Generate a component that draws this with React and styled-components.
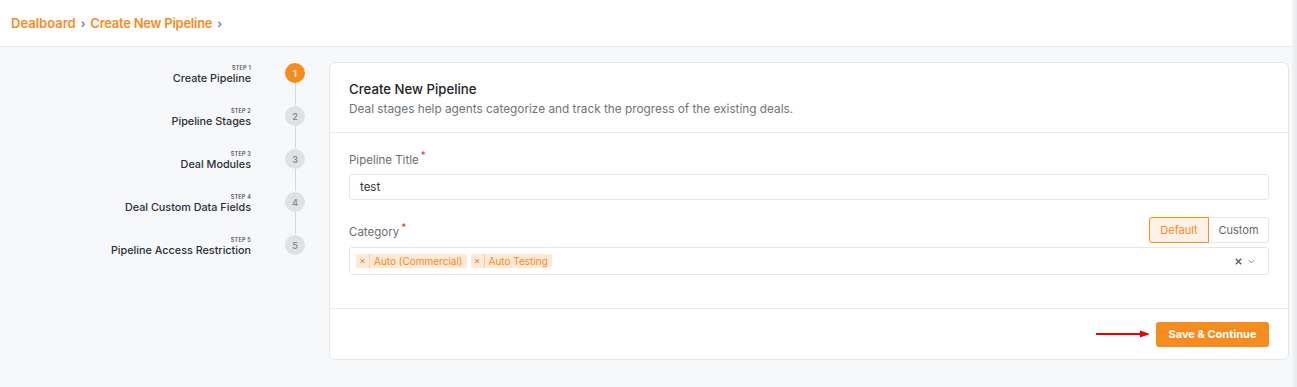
import styled, { createGlobalStyle } from "styled-components";

const GlobalStyle = createGlobalStyle`
  html, body {
    margin: 0;
    padding: 0;
    background: #f7f8fa;
    font-family: Inter, "Noto Sans", sans-serif;
  }
  * { box-sizing: border-box; }
`;

const Page = styled.div`
  width: 1297px;
  height: 387px;
  display: flex;
  background: #f7f8fa;
  overflow: hidden;
`;

const Main = styled.div`
  flex: 1;
  display: flex;
  flex-direction: column;
`;

const Header = styled.div`
  height: 47px;
  flex-shrink: 0;
  background: #fff;
  border-bottom: 1px solid #e9eaec;
  display: flex;
  align-items: center;
  padding-left: 11px;
  gap: 4px;
`;

const Crumb = styled.span`
  color: #f68b1f;
  font-size: 13px;
  font-weight: 600;
  letter-spacing: ${({ tight }) => (tight ? "-0.25px" : "0")};
`;

const Chevron = styled.span`
  color: #555;
  font-size: 12px;
  margin: 0 1px;
`;

const Body = styled.div`
  flex: 1;
  display: flex;
  padding-top: 15px;
`;

const Steps = styled.div`
  width: 329px;
  flex-shrink: 0;
  display: flex;
  flex-direction: column;
`;

const Step = styled.div`
  display: flex;
  align-items: flex-start;
  height: 43px;
`;

const StepText = styled.div`
  width: 251px;
  padding-top: 2px;
  display: flex;
  flex-direction: column;
  align-items: flex-end;
`;

const StepNo = styled.div`
  font-size: 5.5px;
  font-weight: 600;
  color: #555;
  letter-spacing: 0.2px;
  line-height: 8px;
`;

const StepTitle = styled.div`
  font-size: 10.8px;
  font-weight: 500;
  color: #2b2f36;
  line-height: 14px;
`;

const Marker = styled.div`
  width: 78px;
  display: flex;
  flex-direction: column;
  align-items: center;
  align-self: stretch;
  padding-left: 10px;
  padding-top: 1px;
`;

const Dot = styled.div`
  width: 20px;
  height: 20px;
  border-radius: 50%;
  flex-shrink: 0;
  display: flex;
  align-items: center;
  justify-content: center;
  font-size: 9px;
  font-weight: 600;
  background: ${({ active }) => (active ? "#f68b1f" : "#e0e1e3")};
  color: ${({ active }) => (active ? "#fff" : "#8a8d92")};
`;

const Line = styled.div`
  width: 1px;
  flex: 1;
  background: ${({ last }) => (last ? "transparent" : "#d6d7da")};
`;

const Card = styled.div`
  width: 960px;
  height: 298px;
  background: #fff;
  border: 1px solid #e4e6ea;
  border-radius: 6px;
  display: flex;
  flex-direction: column;
`;

const CardHead = styled.div`
  padding: 17px 19px 0;
  height: 70px;
  flex-shrink: 0;
  border-bottom: 1px solid #e9eaec;
`;

const CardTitle = styled.div`
  font-size: 13.2px;
  font-weight: 500;
  color: #222;
  line-height: 18px;
`;

const CardSub = styled.div`
  margin-top: 4px;
  font-size: 11.8px;
  color: #707378;
  line-height: 15px;
`;

const Form = styled.div`
  flex: 1;
  padding: 15px 19px 0;
  border-bottom: 1px solid #e9eaec;
  display: flex;
  flex-direction: column;
`;

const LabelRow = styled.div`
  display: flex;
  align-items: center;
  justify-content: space-between;
  height: ${({ tall }) => (tall ? "26px" : "20px")};
  margin-bottom: ${({ tall }) => (tall ? "4px" : "6px")};
`;

const Label = styled.div`
  font-size: 11.5px;
  color: #6b6e73;
  & sup {
    color: #e53935;
    font-size: 10px;
    margin-left: 2px;
  }
`;

const Input = styled.div`
  height: 26px;
  border: 1px solid #e4e6ea;
  border-radius: 3px;
  display: flex;
  align-items: center;
  padding: 0 10px;
  font-size: 11.5px;
  color: #333;
  margin-bottom: 17px;
`;

const Toggle = styled.div`
  display: flex;
  height: 26px;
`;

const ToggleBtn = styled.div`
  width: 60px;
  display: flex;
  align-items: center;
  justify-content: center;
  font-size: 11px;
  border: 1px solid ${({ on }) => (on ? "#f68b1f" : "#e4e6ea")};
  border-left: ${({ on }) => (on ? "1px solid #f68b1f" : "none")};
  border-radius: ${({ on }) => (on ? "3px 0 0 3px" : "0 3px 3px 0")};
  background: ${({ on }) => (on ? "#fdf1e6" : "#fff")};
  color: ${({ on }) => (on ? "#f68b1f" : "#666")};
`;

const Select = styled.div`
  height: 28px;
  border: 1px solid #e4e6ea;
  border-radius: 3px;
  display: flex;
  align-items: center;
  padding: 0 6px;
  gap: 4px;
`;

const Chip = styled.div`
  display: flex;
  align-items: center;
  height: 14px;
  background: #fde9d6;
  border-radius: 2px;
  font-size: 10px;
  color: #f68b1f;
`;

const ChipX = styled.span`
  width: 14px;
  text-align: center;
  font-size: 9px;
  border-right: 1px solid #f7cfa6;
  line-height: 14px;
  color: #e07a18;
`;

const ChipText = styled.span`
  padding: 0 4px;
`;

const SelectIcons = styled.div`
  margin-left: auto;
  display: flex;
  align-items: center;
  gap: 4px;
  padding-right: 6px;
`;

const Footer = styled.div`
  height: 50px;
  display: flex;
  align-items: center;
  justify-content: flex-end;
  padding-right: 19px;
  gap: 4px;
`;

const SaveBtn = styled.button`
  width: 113px;
  height: 25px;
  border: none;
  border-radius: 3px;
  background: #f68b1f;
  color: #fff;
  font-family: inherit;
  font-size: 11px;
  font-weight: 700;
`;

const Edge = styled.div`
  width: 5px;
  flex-shrink: 0;
  background: linear-gradient(to right, #f3f4f6, #e8e9eb);
`;

const steps = [
  "Create Pipeline",
  "Pipeline Stages",
  "Deal Modules",
  "Deal Custom Data Fields",
  "Pipeline Access Restriction",
];

export default function App() {
  return (
    <>
      <GlobalStyle />
      <Page>
        <Main>
          <Header>
            <Crumb>Dealboard</Crumb>
            <Chevron>›</Chevron>
            <Crumb tight>Create New Pipeline</Crumb>
            <Chevron>›</Chevron>
          </Header>
          <Body>
            <Steps>
              {steps.map((s, i) => (
                <Step key={s}>
                  <StepText>
                    <StepNo>STEP {i + 1}</StepNo>
                    <StepTitle>{s}</StepTitle>
                  </StepText>
                  <Marker>
                    <Dot active={i === 0}>{i + 1}</Dot>
                    <Line last={i === steps.length - 1} />
                  </Marker>
                </Step>
              ))}
            </Steps>
            <Card>
              <CardHead>
                <CardTitle>Create New Pipeline</CardTitle>
                <CardSub>
                  Deal stages help agents categorize and track the progress of the existing deals.
                </CardSub>
              </CardHead>
              <Form>
                <LabelRow>
                  <Label>
                    Pipeline Title<sup>*</sup>
                  </Label>
                </LabelRow>
                <Input>test</Input>
                <LabelRow tall>
                  <Label>
                    Category<sup>*</sup>
                  </Label>
                  <Toggle>
                    <ToggleBtn on>Default</ToggleBtn>
                    <ToggleBtn>Custom</ToggleBtn>
                  </Toggle>
                </LabelRow>
                <Select>
                  <Chip>
                    <ChipX>×</ChipX>
                    <ChipText>Auto (Commercial)</ChipText>
                  </Chip>
                  <Chip>
                    <ChipX>×</ChipX>
                    <ChipText>Auto Testing</ChipText>
                  </Chip>
                  <SelectIcons>
                    <svg width="9" height="9" viewBox="0 0 10 10">
                      <path d="M2 2 L8 8 M8 2 L2 8" stroke="#555" strokeWidth="1.4" />
                    </svg>
                    <svg width="9" height="9" viewBox="0 0 10 10">
                      <path d="M2 3.5 L5 6.5 L8 3.5" stroke="#777" strokeWidth="1" fill="none" />
                    </svg>
                  </SelectIcons>
                </Select>
              </Form>
              <Footer>
                <svg width="56" height="8" viewBox="0 0 56 8">
                  <path d="M0 4 H46" stroke="#e00" strokeWidth="2" />
                  <path d="M44 0.5 L54 4 L44 7.5 Z" fill="#e00" />
                </svg>
                <SaveBtn>Save &amp; Continue</SaveBtn>
              </Footer>
            </Card>
          </Body>
        </Main>
        <Edge />
      </Page>
    </>
  );
}
